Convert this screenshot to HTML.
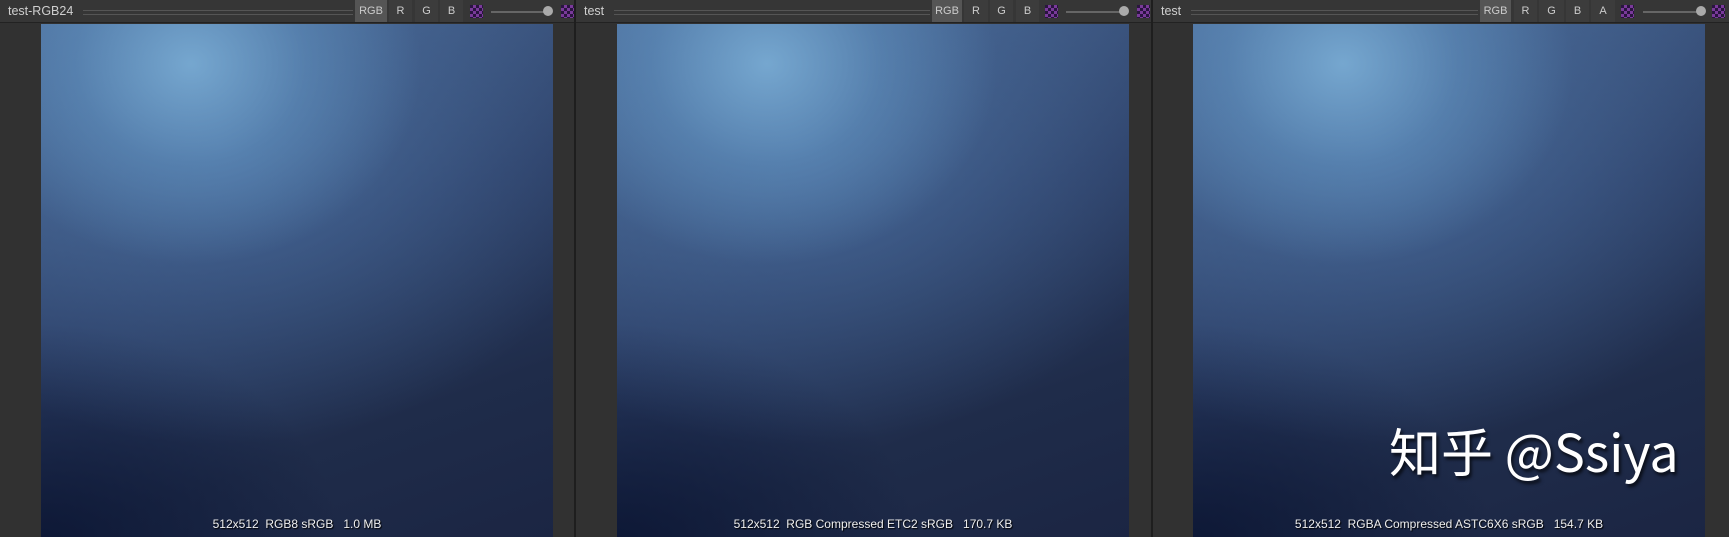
<!DOCTYPE html>
<html><head><meta charset="utf-8"><style>
body{margin:0;width:1729px;height:537px;background:#1e1e1e;overflow:hidden;position:relative;font-family:"Liberation Sans","Noto Sans CJK SC",sans-serif}
.panel{position:absolute;top:0;height:537px;background:#313131}
.hdr{position:absolute;left:0;right:0;top:0;height:22px;background:#363636;border-bottom:1px solid #222}
.t{position:absolute;top:4px;font-size:12.5px;color:#cfcfcf}
.ln{position:absolute;top:10px;height:3px;border-top:1px solid #555;border-bottom:1px solid #555}
.b{position:absolute;top:0;height:22px;background:#3c3c3c;color:#ccc;font-size:11px;line-height:22px;text-align:center}
.b.on{background:#555}
.ic{position:absolute;top:5px;width:13px;height:13px;background:repeating-conic-gradient(#7a3a9a 0 25%,#2a1440 0 50%) 0 0/6px 6px}
.sl{position:absolute;top:11px;height:2px;background:#666}
.kn{position:absolute;top:6px;width:10px;height:10px;border-radius:50%;background:#aaa}
.img{position:absolute;top:24px;width:512px;height:513px;
background:
radial-gradient(ellipse 230px 200px at 150px 40px,rgba(120,170,210,.95),rgba(100,150,195,.5) 50%,rgba(80,120,170,0) 100%),
radial-gradient(ellipse 400px 300px at 180px 120px,rgba(80,120,170,.7),rgba(60,90,140,0) 100%),
radial-gradient(ellipse 300px 220px at 0px 520px,rgba(10,20,50,.85),rgba(10,20,50,0) 100%),
linear-gradient(160deg,#4a6a96 0%,#2d4068 45%,#1f2c4a 75%,#1b2543 100%)}
.cap{position:absolute;top:517px;width:512px;text-align:center;color:#eee;font-size:12px;text-shadow:1px 1px 1px #000}
</style></head><body>
<div class="panel" style="left:0;width:574px">
<div class="hdr"><span class="t" style="left:8px">test-RGB24</span><div class="ln" style="left:83px;width:270px"></div>
<div class="b on" style="left:355px;width:32px">RGB</div><div class="b" style="left:389px;width:23px">R</div><div class="b" style="left:415px;width:23px">G</div><div class="b" style="left:440px;width:23px">B</div>
<div class="ic" style="left:470px"></div><div class="sl" style="left:491px;width:60px"></div><div class="kn" style="left:543px"></div><div class="ic" style="left:561px"></div></div>
<div class="img" style="left:41px"></div><div class="cap" style="left:41px">512x512&nbsp; RGB8 sRGB&nbsp;&nbsp; 1.0 MB</div></div>
<div class="panel" style="left:576px;width:575px">
<div class="hdr"><span class="t" style="left:8px">test</span><div class="ln" style="left:38px;width:316px"></div>
<div class="b on" style="left:356px;width:30px">RGB</div><div class="b" style="left:388px;width:24px">R</div><div class="b" style="left:414px;width:23px">G</div><div class="b" style="left:440px;width:23px">B</div>
<div class="ic" style="left:469px"></div><div class="sl" style="left:490px;width:61px"></div><div class="kn" style="left:543px"></div><div class="ic" style="left:561px"></div></div>
<div class="img" style="left:41px"></div><div class="cap" style="left:41px">512x512&nbsp; RGB Compressed ETC2 sRGB&nbsp;&nbsp; 170.7 KB</div></div>
<div class="panel" style="left:1153px;width:576px">
<div class="hdr"><span class="t" style="left:8px">test</span><div class="ln" style="left:38px;width:287px"></div>
<div class="b on" style="left:327px;width:31px">RGB</div><div class="b" style="left:361px;width:23px">R</div><div class="b" style="left:386px;width:25px">G</div><div class="b" style="left:413px;width:23px">B</div><div class="b" style="left:438px;width:24px">A</div>
<div class="ic" style="left:468px"></div><div class="sl" style="left:490px;width:60px"></div><div class="kn" style="left:543px"></div><div class="ic" style="left:559px"></div></div>
<div class="img" style="left:40px"></div><div class="cap" style="left:40px">512x512&nbsp; RGBA Compressed ASTC6X6 sRGB&nbsp;&nbsp; 154.7 KB</div>
<div style="position:absolute;left:236px;top:424px;font-family:'Noto Sans CJK SC',sans-serif;font-size:52px;color:#fff;white-space:nowrap;text-shadow:2px 3px 3px rgba(0,0,0,.7);line-height:1">知乎 @Ssiya</div></div>
</body></html>
